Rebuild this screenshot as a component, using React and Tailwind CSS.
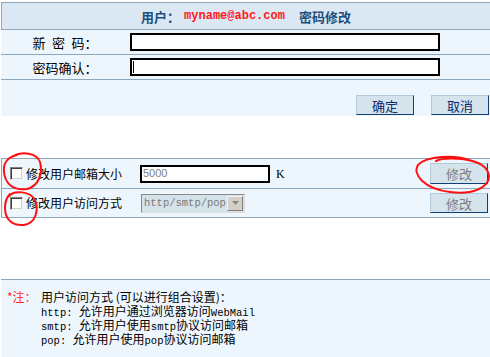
export default function App() {
  return (
    <div className="relative w-[490px] h-[357px] bg-white overflow-hidden text-black font-['Noto_Sans_CJK_SC',sans-serif] text-[12px]">
      {/* Section 1: password change */}
      <div className="mt-[2px] ml-[1px]">
        <div className="h-[28px] border-t border-l border-b border-[#8ea6ba] bg-[#dbe7f2] flex items-center justify-center text-[13px] font-bold text-[#1b4f7f] leading-none">
          <span>用户：</span>
          <span className="ml-[4px] font-['Liberation_Mono',monospace] font-bold text-[12px] text-[#ff1a1a]">myname@abc.com</span>
          <span className="ml-[14px]">密码修改</span>
        </div>
        <div className="h-[25px] border-b border-[#8ea6ba] bg-[#eef6fd] flex items-center">
          <div className="w-[128px] text-center leading-none text-[13px]">新&#8194;密&#8194;码：</div>
          <div className="ml-[1px] w-[310px] h-[18px] border-2 border-black bg-white" />
        </div>
        <div className="h-[25px] border-b border-[#8ea6ba] bg-[#eef6fd] flex items-center">
          <div className="w-[128px] text-center leading-none text-[13px]">密码确认：</div>
          <div className="ml-[1px] w-[310px] h-[18px] border-2 border-black bg-white flex items-center pl-[1px]">
            <div className="w-[1px] h-[12px] bg-black" />
          </div>
        </div>
        <div className="h-[36px] bg-[#eef6fd] flex justify-end items-start pt-[15px] pr-[1px] gap-[17px]">
          <div className="h-[20px] w-[58px] bg-[#d5e3ed] border border-t-[#b3cadb] border-l-[#b3cadb] border-r-[#123f73] border-b-[#123f73] text-[13px] leading-none text-[#0d2a6e] flex items-center justify-center">确定</div>
          <div className="h-[20px] w-[58px] bg-[#d5e3ed] border border-t-[#b3cadb] border-l-[#b3cadb] border-r-[#123f73] border-b-[#123f73] text-[13px] leading-none text-[#0d2a6e] flex items-center justify-center">取消</div>
        </div>
      </div>

      {/* Section 2: mailbox settings */}
      <div className="mt-[42px] ml-[1px] border-l border-[#8ea6ba]">
        <div className="h-[31px] border-t border-b border-[#8ea6ba] bg-[#eef6fd] flex items-center">
          <div className="w-[138px] flex items-center pl-[8px] gap-[3px]">
            <div className="w-[13px] h-[13px] border border-t-[#808080] border-l-[#808080] border-r-[#f4f4f4] border-b-[#f4f4f4] bg-white shadow-[inset_1px_1px_0_#404040,inset_-1px_-1px_0_#d4d0c8]" />
            <span className="leading-none text-[12px]">修改用户邮箱大小</span>
          </div>
          <div className="w-[130px] h-[18px] border-2 border-black bg-white flex items-center pl-[1px] font-['Liberation_Sans',sans-serif] text-[11px] text-[#808080] leading-none">5000</div>
          <span className="ml-[6px] font-['Liberation_Serif',serif] text-[12px] leading-none">K</span>
          <div className="flex-1" />
          <div className="mr-[2px] h-[21px] w-[58px] bg-[#d5e3ed] border border-t-[#b3cadb] border-l-[#b3cadb] border-r-[#123f73] border-b-[#123f73] text-[13px] leading-none text-[#7d7d7d] flex items-center justify-center">修改</div>
        </div>
        <div className="h-[29px] border-b border-[#8ea6ba] bg-[#eef6fd] flex items-center">
          <div className="w-[139px] flex items-center pl-[8px] gap-[3px]">
            <div className="w-[13px] h-[13px] border border-t-[#808080] border-l-[#808080] border-r-[#f4f4f4] border-b-[#f4f4f4] bg-white shadow-[inset_1px_1px_0_#404040,inset_-1px_-1px_0_#d4d0c8]" />
            <span className="leading-none text-[12px]">修改用户访问方式</span>
          </div>
          <div className="w-[104px] h-[19px] border border-t-[#8a8a8a] border-l-[#8a8a8a] border-r-[#dcdcdc] border-b-[#dcdcdc] bg-[#d5e2ea] flex items-center">
            <span className="flex-1 pl-[2px] font-['Liberation_Mono',monospace] text-[10.5px] text-[#7a7a7a] leading-none">http/smtp/pop</span>
            <div className="w-[16px] h-[15px] mr-[1px] bg-[#d4d0c8] border border-t-[#f4f4f4] border-l-[#f4f4f4] border-r-[#808080] border-b-[#808080] flex items-center justify-center">
              <svg width="7" height="4" viewBox="0 0 7 4"><path d="M0 0 H7 L3.5 4 Z" fill="#8a8a8a" /></svg>
            </div>
          </div>
          <div className="flex-1" />
          <div className="mr-[2px] h-[20px] w-[58px] bg-[#d5e3ed] border border-t-[#b3cadb] border-l-[#b3cadb] border-r-[#123f73] border-b-[#123f73] text-[13px] leading-none text-[#7d7d7d] flex items-center justify-center">修改</div>
        </div>
      </div>

      {/* Section 3: note */}
      <div className="mt-[61px] ml-[1px] h-[78px] border-t border-[#8ea6ba] bg-[#eef6fd] flex pt-[10px] pl-[6px]">
        <div className="w-[34px] h-[14px] leading-[14px] text-[#ff2a2a] text-[12px]">*注：</div>
        <div className="flex flex-col text-[12px]">
          <div className="h-[14px] leading-[14px] whitespace-nowrap">用户访问方式 (可以进行组合设置)：</div>
          <div className="h-[14px] leading-[14px] whitespace-nowrap"><span className="font-['Liberation_Mono',monospace] text-[10.5px] leading-[14px]">http: </span>允许用户通过浏览器访问<span className="font-['Liberation_Mono',monospace] text-[10.5px] leading-[14px]">WebMail</span></div>
          <div className="h-[14px] leading-[14px] whitespace-nowrap"><span className="font-['Liberation_Mono',monospace] text-[10.5px] leading-[14px]">smtp: </span>允许用户使用<span className="font-['Liberation_Mono',monospace] text-[10.5px] leading-[14px]">smtp</span>协议访问邮箱</div>
          <div className="h-[14px] leading-[14px] whitespace-nowrap"><span className="font-['Liberation_Mono',monospace] text-[10.5px] leading-[14px]">pop: </span>允许用户使用<span className="font-['Liberation_Mono',monospace] text-[10.5px] leading-[14px]">pop</span>协议访问邮箱</div>
        </div>
      </div>

      {/* Red hand-drawn annotation circles */}
      <svg className="absolute inset-0 pointer-events-none" width="490" height="357" viewBox="0 0 490 357">
        <g fill="none" stroke="#ff1010" strokeWidth="2" strokeLinecap="round" strokeLinejoin="round">
          <path d="M13,156 C22,151 37,153 40,162 C43,173 39,186 27,189 C14,191 5,184 4,172 C3,163 8,157 17,155" />
          <path d="M9,196 C14,190 30,191 35,200 C39,210 36,223 24,225 C12,226 5,219 5,208 C5,201 7,197 10,194" />
          <path d="M472,161 C455,154 426,156 418,165 C412,174 424,189 450,192 C472,195 489,188 489,176 C488,166 478,161 462,159 C450,158 440,159 436,161" />
        </g>
      </svg>
    </div>
  );
}
